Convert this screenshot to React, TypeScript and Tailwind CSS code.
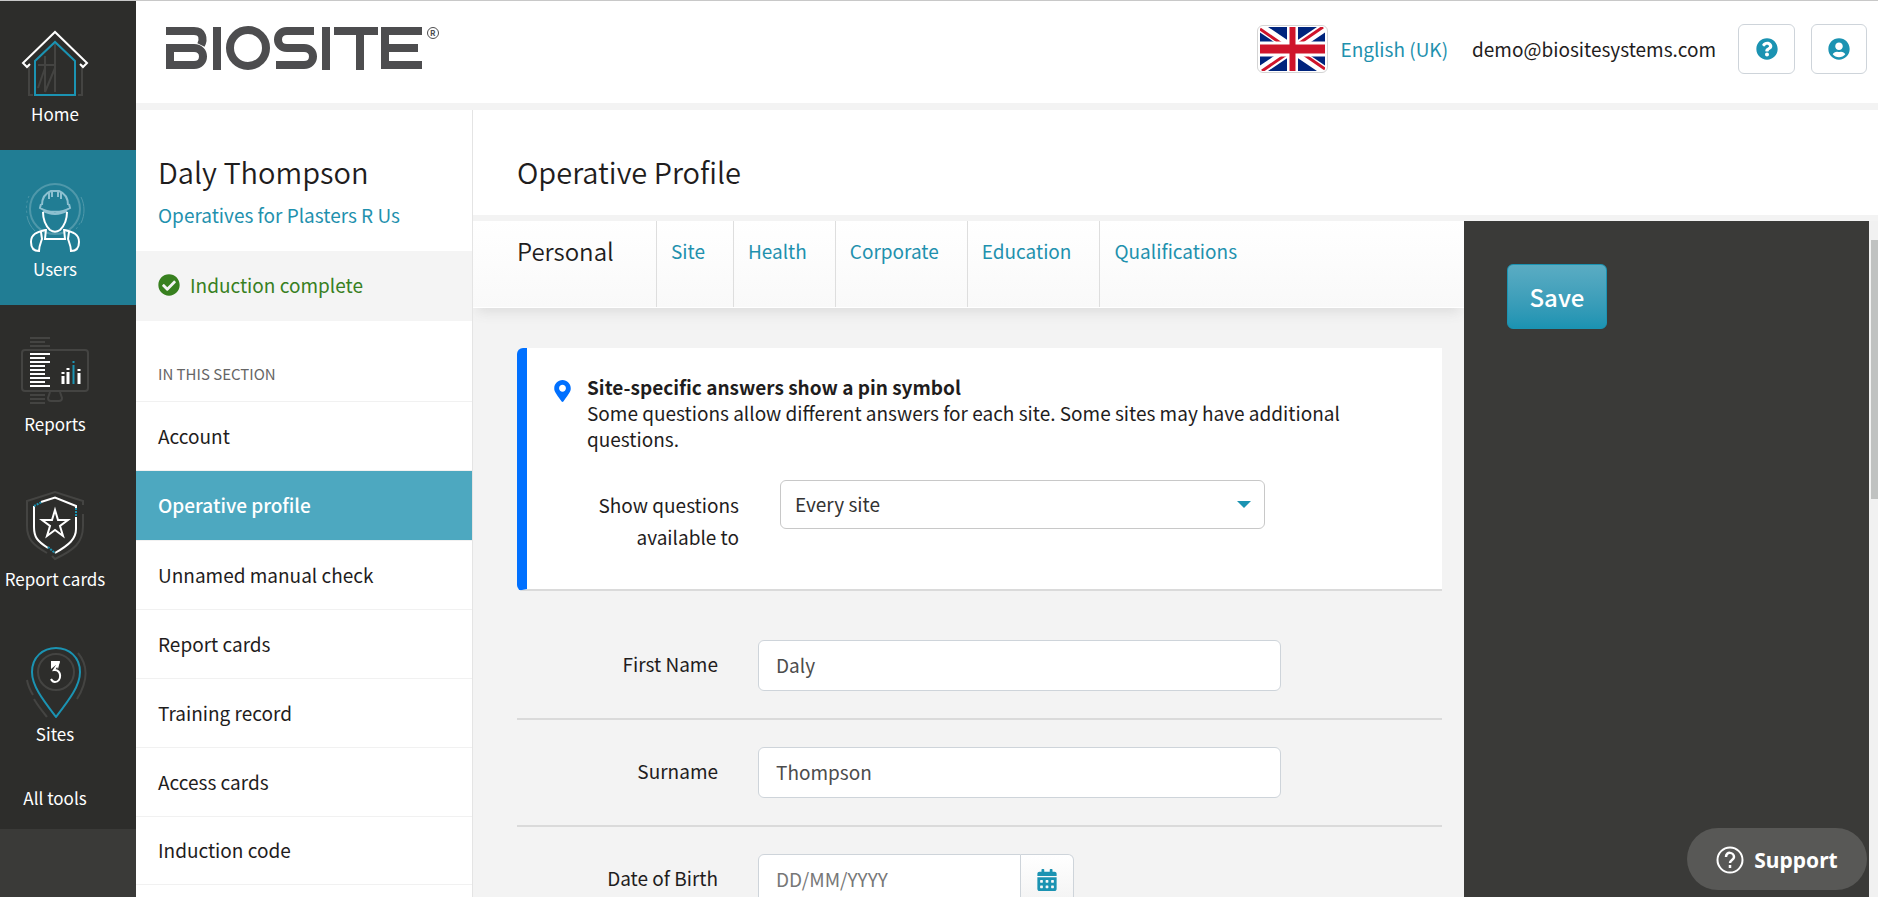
import React from 'react'
import { FaCheckCircle, FaMapMarkerAlt, FaQuestionCircle, FaUserCircle, FaCalendarAlt } from 'react-icons/fa'

const SECTION_LINKS = [
  'Account',
  'Operative profile',
  'Unnamed manual check',
  'Report cards',
  'Training record',
  'Access cards',
  'Induction code',
]

const TABS = ['Site', 'Health', 'Corporate', 'Education', 'Qualifications']

function HomeIcon() {
  return (
    <svg width="68" height="68" viewBox="0 0 68 68" fill="none" strokeWidth="2">
      <path d="M8 34v31h4M61 34v31h-4" stroke="#444442" />
      <path d="M34 14v48M17 35h17M24 26v36M17 58l7-20M24 62l10-24" stroke="#444442" />
      <path d="M14 65V31L34 12l20 19v34z" stroke="#1b93b2" />
      <path d="M9 34l-3 3-4-4L34 2l32 31-4 4-3-3" stroke="#fff" />
    </svg>
  )
}

function UsersIcon() {
  return (
    <svg width="68" height="72" viewBox="0 0 68 72" fill="none">
      <circle cx="34" cy="28" r="25" stroke="#4f98aa" strokeWidth="2" />
      <path d="M8 15a30 30 0 00-2 18" stroke="#4f98aa" strokeDasharray="2 3" />
      <path d="M6 35a28 28 0 008 15M60 16c4 8 4 18 0 26" stroke="#4f98aa" />
      <path d="M59 42a30 30 0 01-8 10" stroke="#4f98aa" strokeDasharray="2 3" />
      <path d="M21 24c0-8 4-12 9-14h8c5 2 9 6 9 14M31 16v-6h6v6M28 11v7M40 11v7M20 23l-1 4c8 5 22 5 30 0l-1-4M22 30c7 4 17 4 24 0" stroke="#8dc0d0" strokeWidth="2" />
      <path d="M22 31c0 9 3 14 7 18 3 2 7 2 10 0 4-4 7-9 7-18" stroke="#fff" strokeWidth="2" />
      <path d="M25 48l-1 10h20l-1-10M24 49c-8 2-14 4-14 12 0 5 2 9 8 9 0-5 2-9 3-12l-1-7M44 49c8 2 14 4 14 12 0 5-2 9-8 9 0-5-2-9-3-12l1-7" stroke="#fff" strokeWidth="2" />
    </svg>
  )
}

function ReportsIcon() {
  return (
    <svg width="70" height="72" viewBox="0 0 70 72" fill="none" strokeWidth="2">
      <path d="M10 2h20M10 6h15M10 10h20M10 59h15M10 63h15M10 67h15" stroke="#444442" />
      <rect x="2" y="14" width="66" height="41" rx="3" stroke="#444442" />
      <path d="M30 56l-2 6q0 3 3 3h8q3 0 3-3l-2-6" stroke="#444442" />
      <path d="M10 18h20M10 22h15M10 26h20M10 30h15M10 34h15M10 38h15M10 42h20M10 46h15M10 50h20" stroke="#fff" />
      <path d="M43 48v-8M43 36v2M48 48V36M48 32v2M59 48V37M59 33v2" stroke="#fff" strokeWidth="3" />
      <path d="M53.500 48V29M53.500 25v2" stroke="#1b93b2" strokeWidth="2" />
    </svg>
  )
}

function ReportCardsIcon() {
  return (
    <svg width="68" height="74" viewBox="0 0 68 74" fill="none" strokeWidth="2">
      <path d="M26 64C12 56 6 50 6 37V12L34 3l28 9v4M62 25v12c0 17-9 24-28 33l-3-3" stroke="#444442" />
      <path d="M20 13L34 8.500 55 17v4M55 28v12c0 10-7 16-21 24M27 59C16 52 13 48 13 38V17" stroke="#fff" />
      <path d="M13 17l8-4M55 19v9M27 58l7 6" stroke="#1b93b2" strokeDasharray="2 1" />
      <path d="M34 21l3 10h10l-8 6 3 10-8-6-8 6 3-10-8-6h10z" stroke="#fff" />
    </svg>
  )
}

function SitesIcon() {
  return (
    <svg width="68" height="72" viewBox="0 0 68 72" fill="none" strokeWidth="2">
      <circle cx="35" cy="26" r="18" stroke="#444442" />
      <path d="M57 7c10 12 10 28-1 46M6 34c1 6 3 10 6 15M13 53c4 7 9 13 13 18" stroke="#444442" />
      <path d="M35 71C22 54 11 40 11 26 11 11 22 2 35 2s24 9 24 24c0 14-11 28-24 45z" stroke="#1b93b2" />
      <path d="M38 16l-5 8c8-1 8 12 1 12-2 0-3-1-4-3" stroke="#fff" />
      <path d="M30 15h9l-2 8-2-4-5 4z" fill="#fff" />
    </svg>
  )
}

const TOOLS = [
  { label: 'Home', icon: <HomeIcon />, active: false },
  { label: 'Users', icon: <UsersIcon />, active: true },
  { label: 'Reports', icon: <ReportsIcon />, active: false },
  { label: 'Report cards', icon: <ReportCardsIcon />, active: false },
  { label: 'Sites', icon: <SitesIcon />, active: false },
]

function Logo() {
  return (
    <svg width="276" height="46" viewBox="0 0 276 46" role="img" aria-label="Biosite" className="text-[#4d4d4f]">
      <g fill="none" stroke="currentColor" strokeWidth="8">
        <path d="M1 7h28c9 0 10 8 7 14" />
        <path d="M1 24h28c12 0 12 17 0 17H5V22" />
        <path d="M52 3v43M161 3v43M195 7v39" />
        <circle cx="83" cy="24" r="18" />
        <path d="M149 7h-27c-12 0-12 17 0 17h17c12 0 12 17 0 17h-28" />
        <path d="M169 7h44M257 7h-37v34h37M220 24h33" />
      </g>
      <circle cx="268" cy="9" r="5.500" fill="none" stroke="currentColor" />
      <text x="265" y="12" fontSize="8" fontWeight="700" fill="currentColor">R</text>
    </svg>
  )
}

function Flag() {
  return (
    <svg width="65" height="44" viewBox="0 0 65 44">
      <path d="M0 0h65v44H0z" fill="#00247d" />
      <path d="M0 0l65 44M65 0L0 44" stroke="#fff" strokeWidth="9" />
      <path d="M0 2l32 22M65 42L33 20M63 0L31 22M2 44l32-22" stroke="#cf142b" strokeWidth="3" />
      <path d="M32.500 0v44" stroke="#fff" strokeWidth="11" />
      <path d="M0 22h65" stroke="#fff" strokeWidth="15" />
      <path d="M32.500 0v44" stroke="#cf142b" strokeWidth="6" />
      <path d="M0 22h65" stroke="#cf142b" strokeWidth="9" />
    </svg>
  )
}

function FieldRow({ label, id, children }: { label: string; id: string; children: React.ReactNode }) {
  return (
    <div className="flex items-center border-b-2 border-[#dadada] pt-[27px] pb-[27px]">
      <label htmlFor={id} className="w-[201px] shrink-0 pb-1 text-right">{label}</label>
      <div className="ml-10 flex w-[523px]">{children}</div>
    </div>
  )
}

export default function App() {
  return (
    <div className="flex h-screen overflow-hidden border-t border-[#c8c8c8] bg-[#f3f3f3] font-['Noto_Sans_CJK_SC',sans-serif] text-[19px] leading-8 text-[#1f1d1d]">
      <nav className="w-[136px] shrink-0 bg-[#3a3a38] text-[17px] leading-6 text-white">
        <div className="bg-[#2d2d2b]">
          {TOOLS.map(t => (
            <a
              key={t.label}
              href="#"
              className={`flex h-[155px] flex-col items-center justify-end pr-[26px] pb-6 first:h-[149px] ${t.active ? 'bg-[#217d94]' : ''}`}
            >
              {t.icon}
              <span className="mt-1 whitespace-nowrap">{t.label}</span>
            </a>
          ))}
          <a href="#" className="block h-[59px] pt-4 pr-[26px] text-center">All tools</a>
        </div>
      </nav>

      <div className="flex min-w-0 flex-1 flex-col">
        <header className="flex h-[109px] shrink-0 items-start border-b-[7px] border-[#f3f3f3] bg-white pt-[23px] pr-[11px] pl-[29px]">
          <a href="#"><Logo /></a>
          <div className="ml-auto flex h-[50px] items-center">
            <div className="rounded-md border border-[#d4d4d4] bg-white px-[2px] py-px"><Flag /></div>
            <a href="#" className="ml-3 pb-px text-[#1f91ae]">English (UK)</a>
            <span className="ml-6 pb-px">demo@biositesystems.com</span>
            <button aria-label="Help" className="ml-[22px] flex h-[50px] w-[57px] items-center justify-center rounded-md border border-[#ced4da] text-[22px] text-[#1b93b2]">
              <FaQuestionCircle />
            </button>
            <button aria-label="My account" className="ml-4 flex h-[50px] w-[56px] items-center justify-center rounded-md border border-[#ced4da] text-[22px] text-[#1b93b2]">
              <FaUserCircle />
            </button>
          </div>
        </header>

        <div className="flex min-h-0 flex-1">
          <aside className="w-[337px] shrink-0 overflow-hidden border-r border-[#e4e4e4] bg-white">
            <div className="h-[141px] px-[22px] pt-[41px]">
              <h2 className="text-[29px] leading-10 font-[350]">Daly Thompson</h2>
              <a href="#" className="mt-2 block text-[#1f91ae]">Operatives for Plasters R Us</a>
            </div>
            <p className="flex h-[70px] items-center gap-[10px] bg-[#f4f4f4] px-[22px] pb-[2px] text-[#38801f]">
              <FaCheckCircle className="text-[22px]" />
              Induction complete
            </p>
            <h3 className="h-[80px] px-[22px] pt-[37px] text-[15px] text-[#666]">IN THIS SECTION</h3>
            {SECTION_LINKS.map(name => (
              <a
                key={name}
                href="#"
                className={`flex items-center border-t border-[#f1f1f1] px-[22px] pb-px last:border-b ${name === 'Operative profile' ? 'h-[70px] bg-[#4da8c0] font-medium text-white' : 'h-[69px]'}`}
              >
                {name}
              </a>
            ))}
          </aside>

          <main className="flex min-w-0 flex-1 flex-col">
            <h1 className="h-[111px] shrink-0 border-b-[6px] border-[#f3f3f3] bg-white px-11 pt-[41px] text-[29px] leading-10 font-[350]">Operative Profile</h1>
            <div className="flex min-h-0 flex-1">
              <div className="min-w-0 flex-1 overflow-hidden">
                <div className="flex h-[87px] border-b border-white bg-linear-to-b from-white to-[#f9f9f9] shadow-[0_8px_12px_-4px_#dcdcdc]">
                  <a href="#" className="w-[183px] pt-[14px] pl-11 text-[24px] font-[350]">Personal</a>
                  {TABS.map(t => (
                    <a key={t} href="#" className="border-l border-[#dedede] pt-[14px] pr-7 pl-[14px] text-[#1f91ae]">{t}</a>
                  ))}
                </div>

                <form className="pr-[22px] pl-11">
                  <section className="mt-10 flex h-[243px] rounded-l-md border-b-2 border-l-[10px] border-b-[#dadada] border-l-[#0070ff] bg-white pt-[26px] pl-[27px]">
                    <FaMapMarkerAlt className="mt-[6px] w-[17px] shrink-0 text-[22px] text-[#0070ff]" />
                    <div className="ml-4 flex-1 pr-16">
                      <div className="leading-[26px]">
                        <strong>Site-specific answers show a pin symbol</strong>
                        <p>Some questions allow different answers for each site. Some sites may have additional questions.</p>
                      </div>
                      <div className="mt-[28px] flex">
                        <label htmlFor="site" className="mt-[9px] w-[152px] text-right">Show questions available to</label>
                        <div className="relative ml-[41px] w-[485px]">
                          <select id="site" className="h-[49px] w-full appearance-none rounded-md border border-[#c8c8c8] bg-white px-[14px] pb-[2px] text-[#333]">
                            <option>Every site</option>
                          </select>
                          <svg width="14" height="7" viewBox="0 0 14 7" className="pointer-events-none absolute top-[21px] right-[14px]">
                            <path d="M0 0h14L7 7z" fill="#1b93b2" />
                          </svg>
                        </div>
                      </div>
                    </div>
                  </section>

                  <div className="mt-[22px]">
                    <FieldRow label="First Name" id="first">
                      <input id="first" defaultValue="Daly" className="h-[51px] w-full rounded-md border border-[#ced4da] bg-white px-[17px] pb-[2px] text-[#4c4c4c]" />
                    </FieldRow>
                    <FieldRow label="Surname" id="surname">
                      <input id="surname" defaultValue="Thompson" className="h-[51px] w-full rounded-md border border-[#ced4da] bg-white px-[17px] pb-[2px] text-[#4c4c4c]" />
                    </FieldRow>
                    <FieldRow label="Date of Birth" id="dob">
                      <input id="dob" placeholder="DD/MM/YYYY" className="h-[51px] w-[263px] rounded-l-md border border-[#ced4da] bg-white px-[17px] pb-[2px] placeholder:text-[#777]" />
                      <button type="button" aria-label="Choose date" className="flex h-[51px] w-[53px] items-center justify-center rounded-r-md border border-l-0 border-[#ced4da] bg-linear-to-b from-white to-[#f3f3f3] text-[22px] text-[#1b93b2]">
                        <FaCalendarAlt />
                      </button>
                    </FieldRow>
                  </div>
                </form>
              </div>

              <div className="w-[405px] shrink-0 bg-[#3a3a38] px-[43px] pt-[43px]">
                <button className="h-[65px] w-[100px] rounded-md border border-[#1b93b2] bg-linear-to-b from-[#5aacc3] to-[#1b93b2] text-[24px] font-medium text-white">Save</button>
              </div>
              <div className="w-[9px] shrink-0 bg-[#f1f1f1] pt-[19px] pl-[2px]">
                <div className="h-[259px] bg-[#c0c2c1]" />
              </div>
            </div>
          </main>
        </div>
      </div>

      <button className="fixed right-[11px] bottom-[7px] flex h-[62px] w-[180px] items-center justify-center gap-[10px] rounded-full bg-[#585856] pt-px font-['Noto_Sans',sans-serif] text-[21px] font-bold text-white">
        <svg width="28" height="28" viewBox="0 0 28 28" fill="none" stroke="#fff">
          <circle cx="14" cy="14" r="12.500" strokeWidth="2" />
          <path d="M10 11c0-6 8-5 8 0 0 3-4 3-4 6M14 19v3" strokeWidth="2.500" />
        </svg>
        Support
      </button>
    </div>
  )
}
